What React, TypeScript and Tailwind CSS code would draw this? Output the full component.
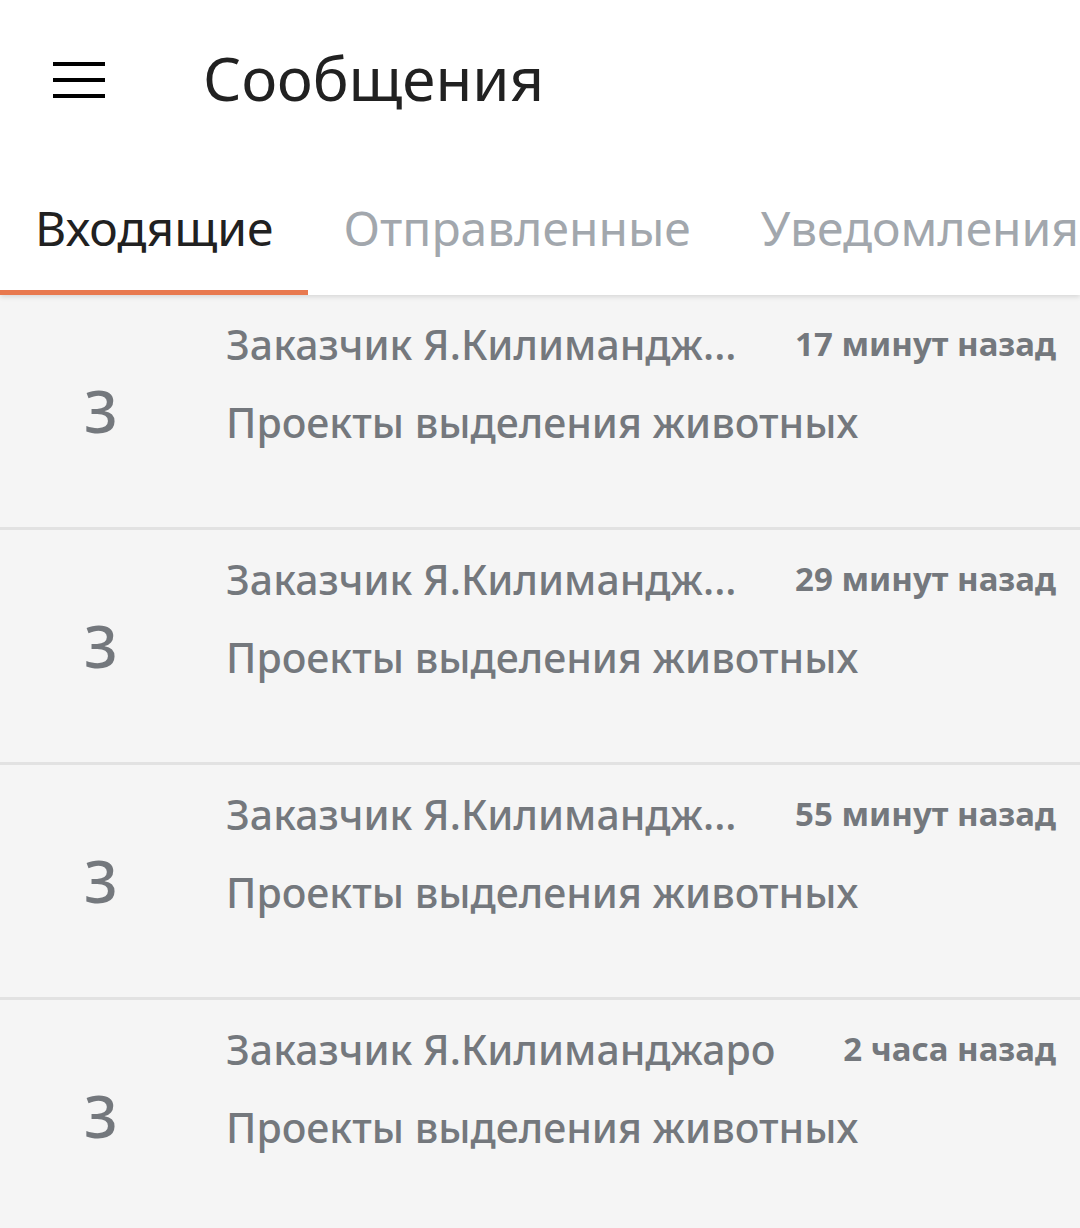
import React from "react"

const tabs = [
  { name: "Входящие", active: true },
  { name: "Отправленные", active: false },
  { name: "Уведомления", active: false },
]

const messages = [
  { from: "Заказчик Я.Килимандж...", time: "17 минут назад" },
  { from: "Заказчик Я.Килимандж...", time: "29 минут назад" },
  { from: "Заказчик Я.Килимандж...", time: "55 минут назад" },
  { from: "Заказчик Я.Килиманджаро", time: "2 часа назад" },
]

export default function App() {
  return (
    <div className="min-h-screen bg-[#f5f5f5] font-['Noto_Sans',sans-serif]">
      {/* Header */}
      <header className="relative z-10 bg-white shadow-[0_2px_5px_rgba(0,0,0,0.12)]">
        <div className="flex h-[160px] items-center">
          <div className="flex w-[203px] pl-[53px]">
            <div className="flex w-[52px] flex-col gap-[12px]">
              <span className="block h-[4px] bg-black" />
              <span className="block h-[4px] bg-black" />
              <span className="block h-[4px] bg-black" />
            </div>
          </div>
          <h1 className="pb-[4px] text-[60px] leading-none text-[#212121]">Сообщения</h1>
        </div>

        <nav className="flex overflow-hidden">
          {tabs.map((tab) => (
            <div
              key={tab.name}
              className={
                tab.active
                  ? "shrink-0 border-b-[5px] border-[#e8794f] px-[35px] pb-[30px] pt-[36px] text-[48px] leading-[64px] whitespace-nowrap text-[#212121]"
                  : "shrink-0 border-b-[5px] border-transparent px-[35px] pb-[30px] pt-[36px] text-[48px] leading-[64px] whitespace-nowrap text-[#a2a7ad]"
              }
            >
              {tab.name}
            </div>
          ))}
        </nav>
      </header>

      {/* Messages */}
      <ul>
        {messages.map((m, i) => (
          <li key={i} className="flex h-[235px] border-b-[3px] border-[#e2e2e2] text-[#74787d]">
            <div className="flex w-[202px] shrink-0 items-center justify-center text-[58px] font-medium leading-none">
              З
            </div>
            <div className="min-w-0 flex-1 pl-[24px] pr-[24px] pt-[20px]">
              <div className="flex items-center justify-between gap-[40px]">
                <span className="whitespace-nowrap text-[41px] font-medium leading-[58px]">
                  {m.from}
                </span>
                <span className="shrink-0 whitespace-nowrap text-[33px] font-bold leading-[58px]">
                  {m.time}
                </span>
              </div>
              <p className="mt-[20px] whitespace-nowrap text-[41px] font-medium leading-[58px]">
                Проекты выделения животных
              </p>
            </div>
          </li>
        ))}
      </ul>
    </div>
  )
}
